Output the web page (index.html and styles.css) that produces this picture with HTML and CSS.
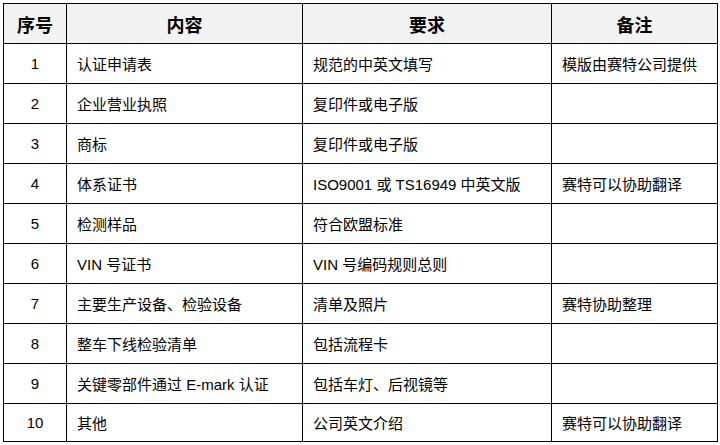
FILE: index.html
```html
<!DOCTYPE html>
<html lang="zh">
<head>
<meta charset="utf-8">
<link rel="stylesheet" href="styles.css">
</head>
<body>
<table class="req">
  <colgroup>
    <col class="c1"><col class="c2"><col class="c3"><col class="c4">
  </colgroup>
  <thead>
    <tr><th>序号</th><th>内容</th><th>要求</th><th>备注</th></tr>
  </thead>
  <tbody>
    <tr><td class="num">1</td><td>认证申请表</td><td>规范的中英文填写</td><td>模版由赛特公司提供</td></tr>
    <tr><td class="num">2</td><td>企业营业执照</td><td>复印件或电子版</td><td></td></tr>
    <tr><td class="num">3</td><td>商标</td><td>复印件或电子版</td><td></td></tr>
    <tr><td class="num">4</td><td>体系证书</td><td>ISO9001 或 TS16949 中英文版</td><td>赛特可以协助翻译</td></tr>
    <tr><td class="num">5</td><td>检测样品</td><td>符合欧盟标准</td><td></td></tr>
    <tr><td class="num">6</td><td>VIN 号证书</td><td>VIN 号编码规则总则</td><td></td></tr>
    <tr><td class="num">7</td><td>主要生产设备、检验设备</td><td>清单及照片</td><td>赛特协助整理</td></tr>
    <tr><td class="num">8</td><td>整车下线检验清单</td><td>包括流程卡</td><td></td></tr>
    <tr><td class="num">9</td><td>关键零部件通过 E-mark 认证</td><td>包括车灯、后视镜等</td><td></td></tr>
    <tr class="last"><td class="num">10</td><td>其他</td><td>公司英文介绍</td><td>赛特可以协助翻译</td></tr>
  </tbody>
</table>
</body>
</html>
```

FILE: styles.css
```css
html, body {
  margin: 0;
  padding: 0;
  background: #ffffff;
}
body {
  padding: 3px 0 0 3px;
  font-family: "Liberation Sans", "Noto Sans CJK SC", sans-serif;
  color: #000;
}
.req {
  border-collapse: collapse;
  table-layout: fixed;
  width: 714px;
}
.c1 { width: 63px; }
.c2 { width: 236px; }
.c3 { width: 249px; }
.c4 { width: 166px; }
.req th, .req td {
  border: 1px solid #000;
  padding: 0 10px;
  vertical-align: middle;
  white-space: nowrap;
}
.req th {
  height: 39px;
  background: #f2f2f2;
  font-size: 18px;
  font-weight: bold;
  text-align: center;
}
.req td {
  height: 39px;
  font-size: 15px;
  text-align: left;
}
.req tr.last td { height: 37px; }
.req td.num {
  text-align: center;
  padding: 0;
}
```
